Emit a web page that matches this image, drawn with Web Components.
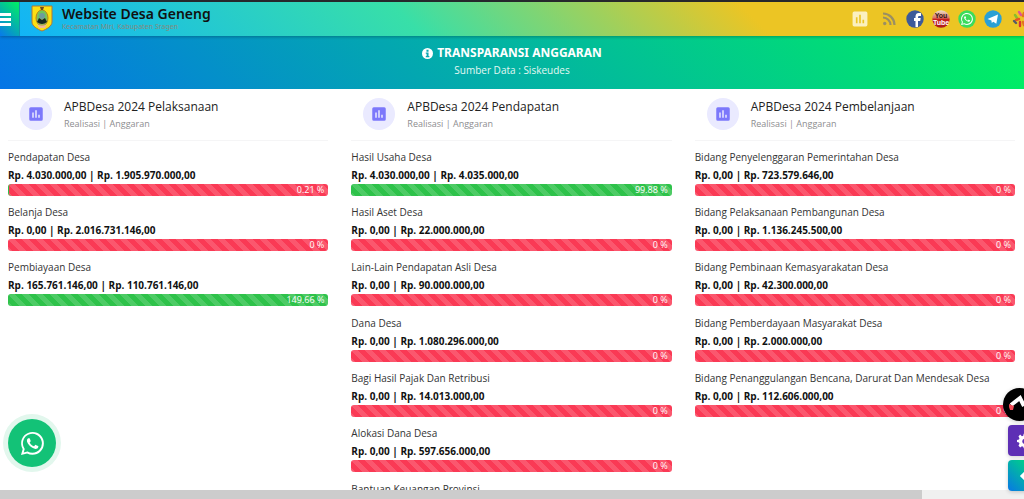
<!DOCTYPE html>
<html lang="id">
<head>
<meta charset="utf-8">
<title>Website Desa Geneng</title>
<style>
html, body { margin: 0; height: 100%; overflow: hidden; background: #fff; }
body { font-family: "Open Sans", "Noto Sans", sans-serif; color: #222; }
</style>
</head>
<body>
<village-app></village-app>
<script>
const chartIcon = '<svg viewBox="0 0 24 24" aria-hidden="true"><path fill="currentColor" d="M19 3H5a2 2 0 0 0-2 2v14a2 2 0 0 0 2 2h14a2 2 0 0 0 2-2V5a2 2 0 0 0-2-2zM9 17H7v-7h2zm4 0h-2V7h2zm4 0h-2v-4h2z"/></svg>';
const waPath = 'M13.6 2.3A7.8 7.8 0 0 0 8 0C3.6 0 .1 3.6.1 7.9c0 1.4.4 2.8 1.1 4L0 16l4.200-1.100a7.900 7.900 0 0 0 3.800 1c4.400 0 7.900-3.600 7.900-7.900a7.900 7.900 0 0 0-2.300-5.700zM8 14.500a6.600 6.600 0 0 1-3.400-.9l-.2-.1-2.500.7.700-2.400-.2-.3a6.600 6.600 0 1 1 5.600 3zm3.600-4.900c-.2-.1-1.200-.6-1.400-.6-.2-.1-.3-.1-.4.1l-.6.800c-.1.100-.2.100-.4 0-.2-.1-.8-.3-1.600-1-.6-.5-1-1.200-1.100-1.400-.1-.2 0-.3.100-.4l.3-.3.2-.4v-.3L6.100 4.600c-.2-.4-.3-.3-.4-.3h-.4c-.1 0-.3 0-.5.200s-.7.700-.7 1.600.7 1.900.8 2c.1.100 1.400 2.100 3.400 3 2 .9 2 .6 2.300.6.400 0 1.200-.5 1.300-1 .2-.5.200-.9.100-1z';

function define(name, html, setup) {
  const template = document.createElement('template');
  template.innerHTML = html;
  customElements.define(name, class extends HTMLElement {
    connectedCallback() {
      if (this.shadowRoot) return;
      this.attachShadow({ mode: 'open' }).append(template.content.cloneNode(true));
      if (setup) setup(this, this.shadowRoot);
    }
  });
}

define('site-header', `
<style>
:host { display: flex; align-items: stretch; height: 34px; border-top: 2px solid #26282c; flex: none;
  background: linear-gradient(45deg, #10b2fa 0%, #38dfa8 40%, #ecc524 73%, #ecc524 100%); box-shadow: 0 1px 3px #0004; position: relative; z-index: 1; overflow: hidden; }
button { width: 20px; border: 0; padding: 0; margin: 0; background: linear-gradient(45deg, #0879ec, #00f260); border-right: 1px solid #1693ad; }
button svg { display: block; width: 11px; height: 34px; }
.brand { display: flex; align-items: center; gap: 9px; padding-left: 11px; color: #111; text-decoration: none; font-family: "Noto Sans", sans-serif; }
.crest { width: 22px; height: 28px; }
b { display: block; font-size: 14px; line-height: 17px; font-weight: 600; white-space: nowrap; }
small { display: block; font-size: 7px; line-height: 10px; color: #858a80; white-space: nowrap; }
.brand span { padding-bottom: 1px; }
nav { margin-left: auto; display: flex; align-items: center; gap: 8px; margin-right: -4px; }
nav a { display: flex; width: 18px; height: 18px; }
nav a:first-child { color: #fbf0bf; margin-right: 3px; }
nav svg { width: 18px; height: 18px; }
nav a:first-child svg { transform: scale(1.1); }
</style>
<button aria-label="Menu"><svg viewBox="0 0 11 34"><path fill="#fff" d="M0 11h11v3H0zM0 16h11v3H0zM0 21h11v3H0z"/></svg></button>
<a class="brand" href="#">
<svg class="crest" viewBox="0 1 22 28" aria-hidden="true"><path d="M1 2h20v16c0 4-5 7-10 9C6 25 1 22 1 18z" fill="#fcdf13" stroke="#ad7939"/><ellipse cx="11" cy="14" rx="6" ry="8" fill="#9cb557" stroke="#b48818"/><path d="M7 9q4-5 8 0l1 7q-5-4-10 0z" fill="#6ec65a"/><circle cx="11" cy="12" r="3" fill="#6d9d9c"/><path d="M6 18l2-4 3 2 3-2 2 4q-5 4-10 0z" fill="#172822"/><path d="M6 20q5 3 10 0l-2 4H8z" fill="#efb79a"/><path d="M9 3h4l-1 3h-2z" fill="#6f4b20"/></svg>
<span><b>Website Desa Geneng</b><small>Kecamatan Miri, Kabupaten Sragen</small></span></a>
<nav>
<a href="#" aria-label="Anggaran">${chartIcon}</a>
<a href="#" aria-label="RSS"><svg viewBox="0 0 18 18"><g fill="none" stroke="#9b8f62" stroke-width="2.200"><path d="M3 7.500a7.500 7.500 0 0 1 7.500 7.500M3 3.500A11.500 11.500 0 0 1 14.500 15"/></g><circle cx="4.700" cy="13.500" r="1.700" fill="#9b8f62"/></svg></a>
<a href="#" aria-label="Facebook"><svg viewBox="0 0 18 18"><circle cx="9" cy="9" r="8.700" fill="#3c5a9a"/><path fill="#fff" d="M9.500 17v-6H8V8h1.500V6.500C9.500 4 11 3 12.500 3H15v3h-1.500C12.500 6 12 6.500 12 7.200V8h2.700l-.5 3H12v6z"/></svg></a>
<a href="#" aria-label="YouTube"><svg viewBox="0 0 18 18"><defs><linearGradient id="y" x2="0" y2="1"><stop stop-color="#ece0c8"/><stop offset=".45" stop-color="#d77263"/><stop offset=".5" stop-color="#c91f20"/><stop offset="1" stop-color="#a91b1c"/></linearGradient></defs><circle cx="9" cy="9" r="8.700" fill="url(#y)"/><text x="9" y="8" text-anchor="middle" font-family="Liberation Sans" font-weight="bold" font-size="7" fill="#321515">You</text><text x="9" y="15" text-anchor="middle" font-family="Liberation Sans" font-weight="bold" font-size="7" fill="#fff">Tube</text></svg></a>
<a href="#" aria-label="WhatsApp"><svg viewBox="0 0 18 18"><circle cx="9" cy="9" r="8.700" fill="#3bdc5b"/><path transform="translate(3 3) scale(.75)" fill="#fff" d="${waPath}"/></svg></a>
<a href="#" aria-label="Telegram"><svg viewBox="0 0 18 18"><circle cx="9" cy="9" r="8.700" fill="#29a0d5"/><path fill="#fff" d="M3.500 9l10.500-4.500-1.700 9.300-3-2.100L7.800 13l-.4-2.600z"/></svg></a>
<a href="#" aria-label="Tema"><svg viewBox="0 0 18 18" fill="none" stroke-width="2.400" stroke-linecap="round"><path stroke="#e15391" d="M9 2l2 3"/><path stroke="#88bd2c" d="M5 5l2 3"/><path stroke="#e95325" d="M6 10l3-1"/><path stroke="#555c66" d="M4 11l2 2"/><path stroke="#db3232" d="M10 12l0 4"/><path stroke="#e46f21" d="M13 6l1-3M13 12l1 3"/></svg></a>
</nav>`);

define('page-banner', `
<style>
:host { display: block; flex: none; text-align: center; color: #fff; padding: 7px 0 12px; background: linear-gradient(45deg, #0575e6, #00f260); }
h1 { margin: 0; display: flex; justify-content: center; align-items: center; gap: 4px; font-size: 12px; line-height: 20px; font-weight: 700; font-family: "Noto Sans", sans-serif; }
h1 svg { width: 11px; height: 11px; }
p { margin: 0; font-size: 10px; line-height: 14px; color: #e4f8f3; }
</style>
<h1><svg viewBox="0 0 16 16" aria-hidden="true"><circle cx="8" cy="8" r="8" fill="#fff"/><path fill="#0aa7b3" d="M6.500 2.500h3v2.800h-3zM5.500 6.500h4v5h1.200v2H5.500v-2h1.200v-3H5.500z"/></svg><slot></slot></h1>
<p><slot name="source"></slot></p>`);

define('budget-column', `
<style>
:host { display: block; min-width: 0; }
header { display: flex; gap: 12px; padding: 8px 0 8px 12px; height: 35px; border-bottom: 1px solid #f5f5f6; margin-bottom: 7px; }
.icon { box-sizing: border-box; width: 32px; height: 32px; padding: 7px; border-radius: 50%; background: #eaeaff; color: #7c78fb; margin-top: 1px; }
.icon svg { display: block; width: 18px; height: 18px; }
h2 { margin: 0; font-size: 12px; line-height: 19px; font-weight: 400; color: #222; white-space: nowrap; }
p { margin: 0; font-size: 9px; line-height: 15px; color: #8d8d8f; }
</style>
<section><header><span class="icon">${chartIcon}</span><div><h2></h2><p>Realisasi | Anggaran</p></div></header><slot></slot></section>`,
(host, root) => { root.querySelector('h2').textContent = host.getAttribute('heading'); });

define('budget-item', `
<style>
:host { display: block; height: 55px; white-space: nowrap; }
:host(:nth-child(3n)) { margin-bottom: 1px; }
h3 { margin: 0; font-size: 10px; line-height: 18px; font-weight: 400; color: #333; }
b { display: block; font-size: 10px; line-height: 18px; font-weight: 700; color: #111; min-height: 18px; }
.track { height: 12px; border-radius: 3px; overflow: hidden; display: flex; justify-content: flex-end; align-items: center;
 font-size: 9px; line-height: 12px; padding-right: 4px; color: #fff;
 background: linear-gradient(45deg, #ffffff26 25%, transparent 25% 50%, #ffffff26 50% 75%, transparent 75%) 0 0 / 14px 14px, #fa3a55; }
:host([good]) .track { background-color: #2ec24a; }
:host([started]) .track { box-shadow: inset 1px 0 #2ec24a; }
</style>
<h3></h3><b></b><div class="track" role="progressbar"><span></span></div>`,
(host, root) => {
  root.querySelector('h3').textContent = host.getAttribute('label');
  root.querySelector('b').textContent = host.getAttribute('amount');
  root.querySelector('span').textContent = host.getAttribute('percent') + ' %';
  const bar = root.querySelector('.track');
  bar.setAttribute('aria-label', host.getAttribute('label'));
  bar.setAttribute('aria-valuenow', host.getAttribute('percent'));
});

define('floating-tools', `
<style>
button { border: 0; margin: 0; padding: 0; display: flex; align-items: center; color: #fff; }
.wa { position: fixed; left: 8px; bottom: 32px; width: 48px; height: 48px; border-radius: 50%; background: #13c277; box-shadow: 0 0 0 5px #e2f7ed; justify-content: center; }
.wa svg { width: 23px; height: 23px; }
.side { position: fixed; right: -16px; bottom: 8px; display: grid; gap: 4px; justify-items: start; }
.side button { width: 32px; height: 31px; margin-left: 5px; padding-left: 9px; border-radius: 4px; box-shadow: 0 1px 4px #0003; }
.side .access { width: 33px; height: 33px; margin-left: 0; padding: 0; border-radius: 50%; background: #000; }
.settings { background: #5e2fb5; }
.back { background: linear-gradient(45deg, #0878e5, #00c990 70%); }
.side svg { width: 16px; height: 16px; }
.side .access svg { width: 33px; height: 33px; }
</style>
<button class="wa" aria-label="WhatsApp"><svg viewBox="0 0 16 16"><path fill="#fff" d="${waPath}"/></svg></button>
<div class="side">
<button class="access" aria-label="Aksesibilitas"><svg viewBox="0 0 33 33"><path d="M8 17l9-7 4 8" fill="none" stroke="#fff" stroke-width="4"/><path d="M6 16l5 2-1 4H7l-1-3z" fill="#f24b57"/></svg></button>
<button class="settings" aria-label="Pengaturan"><svg viewBox="0 0 24 24"><path fill="#fff" d="M10 1h4l.6 3 2 .9L19.300 3.300l2.400 2.800-1.500 2.600.7 2.100 3 .7v3l-3 .7-.8 2 1.600 2.700-2.600 2.700-2.700-1.600-2 .8L14 23h-4l-.6-2.200-2-.8-2.700 1.600-2.500-2.700 1.500-2.700-.8-2-2.900-.7v-3l3-.7.700-2.100-1.500-2.600 2.500-2.800L7.400 4.900l2-.9z"/><circle cx="12" cy="12.500" r="4" fill="#5e2fb5"/></svg></button>
<button class="back" aria-label="Kembali"><svg viewBox="0 0 16 16"><path d="M9 4L5 8l4 4" fill="none" stroke="#fff" stroke-width="3"/></svg></button>
</div>`);

define('scroll-strip', `
<style>:host { display: block; height: 9px; background: #f0f0f0; position: relative; flex: none; } div { height: 9px; width: 90%; background: #ccc; }</style><div></div>`);

define('village-app', `
<style>
:host { display: flex; flex-direction: column; height: 100vh; overflow: hidden; }
main { flex: 1; min-height: 0; overflow: hidden; display: grid; grid-template-columns: repeat(3, minmax(0, 1fr)); gap: 23px; padding: 0 9px 0 8px; }
</style>
<site-header></site-header>
<page-banner>TRANSPARANSI ANGGARAN<span slot="source">Sumber Data : Siskeudes</span></page-banner>
<main></main>
<scroll-strip></scroll-strip>
<floating-tools></floating-tools>`, (host, root) => {
  const data = [
    ['APBDesa 2024 Pelaksanaan', [
      ['Pendapatan Desa', 'Rp. 4.030.000,00 | Rp. 1.905.970.000,00', '0.21'],
      ['Belanja Desa', 'Rp. 0,00 | Rp. 2.016.731.146,00', '0'],
      ['Pembiayaan Desa', 'Rp. 165.761.146,00 | Rp. 110.761.146,00', '149.66']]],
    ['APBDesa 2024 Pendapatan', [
      ['Hasil Usaha Desa', 'Rp. 4.030.000,00 | Rp. 4.035.000,00', '99.88'],
      ['Hasil Aset Desa', 'Rp. 0,00 | Rp. 22.000.000,00', '0'],
      ['Lain-Lain Pendapatan Asli Desa', 'Rp. 0,00 | Rp. 90.000.000,00', '0'],
      ['Dana Desa', 'Rp. 0,00 | Rp. 1.080.296.000,00', '0'],
      ['Bagi Hasil Pajak Dan Retribusi', 'Rp. 0,00 | Rp. 14.013.000,00', '0'],
      ['Alokasi Dana Desa', 'Rp. 0,00 | Rp. 597.656.000,00', '0'],
      ['Bantuan Keuangan Provinsi', '', '0']]],
    ['APBDesa 2024 Pembelanjaan', [
      ['Bidang Penyelenggaran Pemerintahan Desa', 'Rp. 0,00 | Rp. 723.579.646,00', '0'],
      ['Bidang Pelaksanaan Pembangunan Desa', 'Rp. 0,00 | Rp. 1.136.245.500,00', '0'],
      ['Bidang Pembinaan Kemasyarakatan Desa', 'Rp. 0,00 | Rp. 42.300.000,00', '0'],
      ['Bidang Pemberdayaan Masyarakat Desa', 'Rp. 0,00 | Rp. 2.000.000,00', '0'],
      ['Bidang Penanggulangan Bencana, Darurat Dan Mendesak Desa', 'Rp. 0,00 | Rp. 112.606.000,00', '0']]]];
  const main = root.querySelector('main');
  for (const [heading, items] of data) {
    const column = document.createElement('budget-column');
    column.setAttribute('heading', heading);
    for (const [label, amount, percent] of items) {
      const item = document.createElement('budget-item');
      item.setAttribute('label', label);
      item.setAttribute('amount', amount);
      item.setAttribute('percent', percent);
      item.toggleAttribute('good', Number(percent) > 50);
      item.toggleAttribute('started', Number(percent) > 0);
      column.append(item);
    }
    main.append(column);
  }
});
</script>
</body>
</html>
